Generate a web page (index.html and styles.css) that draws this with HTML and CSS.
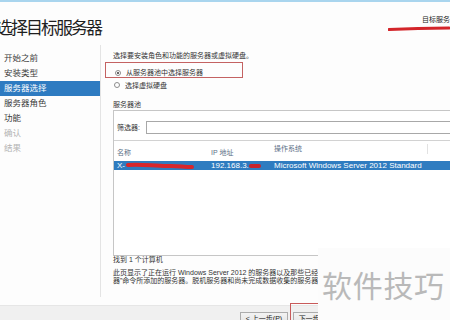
FILE: index.html
```html
<!DOCTYPE html>
<html lang="zh-CN">
<head>
<meta charset="utf-8">
<title>选择目标服务器</title>
<link rel="stylesheet" href="styles.css">
</head>
<body>
<div class="page">
  <div class="topline"></div>
  <header class="header">
    <h1 class="title">选择目标服务器</h1>
    <div class="target">
      <div class="target-label">目标服务器</div>
      <svg class="scribble-top" width="62" height="7" viewBox="0 0 62 7"><path d="M1 4.5 L30 3.5 L61 3" stroke="#d3252a" stroke-width="3.2" stroke-linecap="round" fill="none"/></svg>
    </div>
  </header>
  <div class="main">
    <nav class="nav">
      <div class="nav-item">开始之前</div>
      <div class="nav-item">安装类型</div>
      <div class="nav-item active">服务器选择</div>
      <div class="nav-item">服务器角色</div>
      <div class="nav-item">功能</div>
      <div class="nav-item disabled">确认</div>
      <div class="nav-item disabled">结果</div>
    </nav>
    <section class="content">
      <p class="desc">选择要安装角色和功能的服务器或虚拟硬盘。</p>
      <div class="option option-marked"><span class="radio radio-on"></span>从服务器池中选择服务器</div>
      <div class="option option-second"><span class="radio"></span>选择虚拟硬盘</div>
      <div class="pool-label">服务器池</div>
      <div class="pool">
        <div class="filter"><span class="filter-label">筛选器:</span><span class="filter-input"></span></div>
        <div class="grid-head">
          <span class="c-name">名称</span><span class="c-ip">IP 地址</span><span class="c-os c-os-head">操作系统</span>
        </div>
        <div class="grid-row selected">
          <span class="c-name">X-<svg class="scribble-row" width="68" height="9" viewBox="0 0 68 9"><path d="M2 4 C15 2.5 30 5.5 44 5 C52 4.8 58 6 66 6" stroke="#d8262b" stroke-width="4" stroke-linecap="round" fill="none"/></svg></span><span class="c-ip">192.168.3.<span class="blot"></span></span><span class="c-os">Microsoft Windows Server 2012 Standard</span>
        </div>
      </div>
      <p class="found">找到 1 个计算机</p>
      <p class="note">此页显示了正在运行 Windows Server 2012 的服务器以及那些已经在服务器管理器中使用“添加服务<br>器”命令所添加的服务器。脱机服务器和尚未完成数据收集的服务器将不会在此页中显示。</p>
    </section>
  </div>
  <footer class="footer">
    <span class="btn">&lt; 上一步(P)</span>
    <span class="highlight"><span class="btn">下一步(N) &gt;</span></span>
    <span class="btn">安装(I)</span>
    <span class="btn">取消</span>
  </footer>
  <div class="watermark">软件技巧</div>
</div>
</body>
</html>
```
FILE: styles.css
```css
* { box-sizing: border-box; margin: 0; padding: 0; }
html, body { width: 450px; height: 320px; overflow: hidden; }
body {
  background: #fdfdfd;
  font-family: "Liberation Sans", "Noto Sans CJK SC", sans-serif;
  color: #333;
}
.page {
  position: relative;
  width: 450px;
  height: 320px;
  display: flex;
  flex-direction: column;
  overflow: hidden;
}
.topline { height: 2px; flex: none; background: #a9d5ee; }
.header {
  height: 43px;
  flex: none;
  display: flex;
  justify-content: space-between;
  align-items: flex-start;
}
.title {
  font-family: "Noto Sans CJK SC", sans-serif;
  font-weight: 400;
  font-size: 17px;
  letter-spacing: -2px;
  line-height: 20px;
  margin: 14.5px 0 0 -4px;
  color: #1f1f1f;
}
.target {
  width: 62px;
  padding-top: 14px;
  display: flex;
  flex-direction: column;
}
.target-label {
  font-size: 7px;
  line-height: 8px;
  margin-left: 34px;
  white-space: nowrap;
  color: #222;
}
.scribble-top { display: block; margin-top: 1px; }

.main { height: 252px; flex: none; display: flex; }
.nav {
  width: 101px;
  flex: none;
  border-right: 1px solid #e4e4e4;
  padding-top: 5.5px;
}
.nav-item {
  height: 15px;
  line-height: 15px;
  font-size: 8.5px;
  padding-left: 4px;
  color: #3a3a3a;
  white-space: nowrap;
}
.nav-item.active { background: #2e7bc1; color: #fff; }
.nav-item.disabled { color: #b4b4b4; }

.content {
  flex: 1;
  min-width: 0;
  padding: 5.5px 0 0 12px;
  font-size: 7px;
  line-height: 9px;
  color: #333;
}
.desc { white-space: nowrap; }
.option { display: flex; align-items: center; white-space: nowrap; height: 9px; }
.option-marked {
  margin: 2.5px 0 0 -8px;
  width: 138px;
  height: 16px;
  border: 1px solid #c46262;
  padding: 5px 0 0 8px;
  align-items: flex-start;
}
.option-marked .radio { margin-top: 1.5px; }
.option-second { margin-top: 2.5px; }
.radio {
  width: 6px;
  height: 6px;
  border: 1px solid #8c8c8c;
  border-radius: 50%;
  background: #fff;
  margin: 0 5px 0 1px;
  flex: none;
  display: flex;
  align-items: center;
  justify-content: center;
}
.radio-on::after {
  content: "";
  width: 2px;
  height: 2px;
  border-radius: 50%;
  background: #333;
}
.pool-label { margin-top: 10px; }
.pool {
  margin: 1.5px -3px 0 0;
  height: 146px;
  border: 1px solid #c6c6c6;
  background: #fff;
}
.filter {
  display: flex;
  align-items: center;
  padding: 10px 0 6px 3px;
  border-bottom: 1px solid #d2d2d2;
}
.filter-label { width: 29px; flex: none; color: #333; }
.filter-input {
  flex: 1;
  height: 13px;
  border: 1px solid #a8a8a8;
  background: #fff;
}
.grid-head {
  height: 20px;
  display: flex;
  padding-top: 3px;
  color: #5b6f86;
}
.grid-row { height: 9px; display: flex; font-size: 8px; line-height: 9px; }
.grid-row.selected { background: #2f7cc0; color: #fff; }
.c-name { width: 94px; padding-left: 3px; flex: none; white-space: nowrap; display: flex; align-items: center; }
.c-ip { width: 63px; padding-left: 3px; flex: none; white-space: nowrap; display: flex; align-items: center; }
.c-os { width: 157px; padding-left: 3px; flex: none; white-space: nowrap; }
.c-os-head { border-right: 1px solid #e2e2e2; height: 10px; }
.scribble-row { display: block; margin-left: 1px; }
.blot {
  display: inline-block;
  width: 12px;
  height: 4px;
  background: #c8232b;
  border-radius: 2px;
}
.found { margin-top: 0; line-height: 8px; white-space: nowrap; }
.note { margin-top: 5px; line-height: 8px; white-space: nowrap; }

.footer {
  height: 15px;
  flex: none;
  margin-top: 8px;
  background: #f0f0f0;
  border-top: 1px solid #e6e6e6;
  display: flex;
  align-items: flex-start;
  padding: 6px 0 0 240px;
  gap: 2px;
}
.btn {
  width: 48px;
  height: 14px;
  flex: none;
  border: 1px solid #acacac;
  background: linear-gradient(#f3f3f3, #e2e2e2);
  font-size: 7px;
  line-height: 11px;
  text-align: center;
  color: #222;
  white-space: nowrap;
}
.highlight {
  flex: none;
  margin-top: -9px;
  border: 1px solid #c85a5a;
  padding: 8px 2px 0 2px;
  height: 30px;
}
.highlight .btn { display: block; }
.watermark {
  position: absolute;
  left: 318px;
  top: 248px;
  right: 0;
  bottom: 0;
  background: #fcfcfc;
  display: flex;
  align-items: center;
  padding-left: 4px;
  font-family: "Noto Sans CJK SC", sans-serif;
  font-size: 30px;
  letter-spacing: 0.7px;
  color: #b9b9b9;
  white-space: nowrap;
}
```
